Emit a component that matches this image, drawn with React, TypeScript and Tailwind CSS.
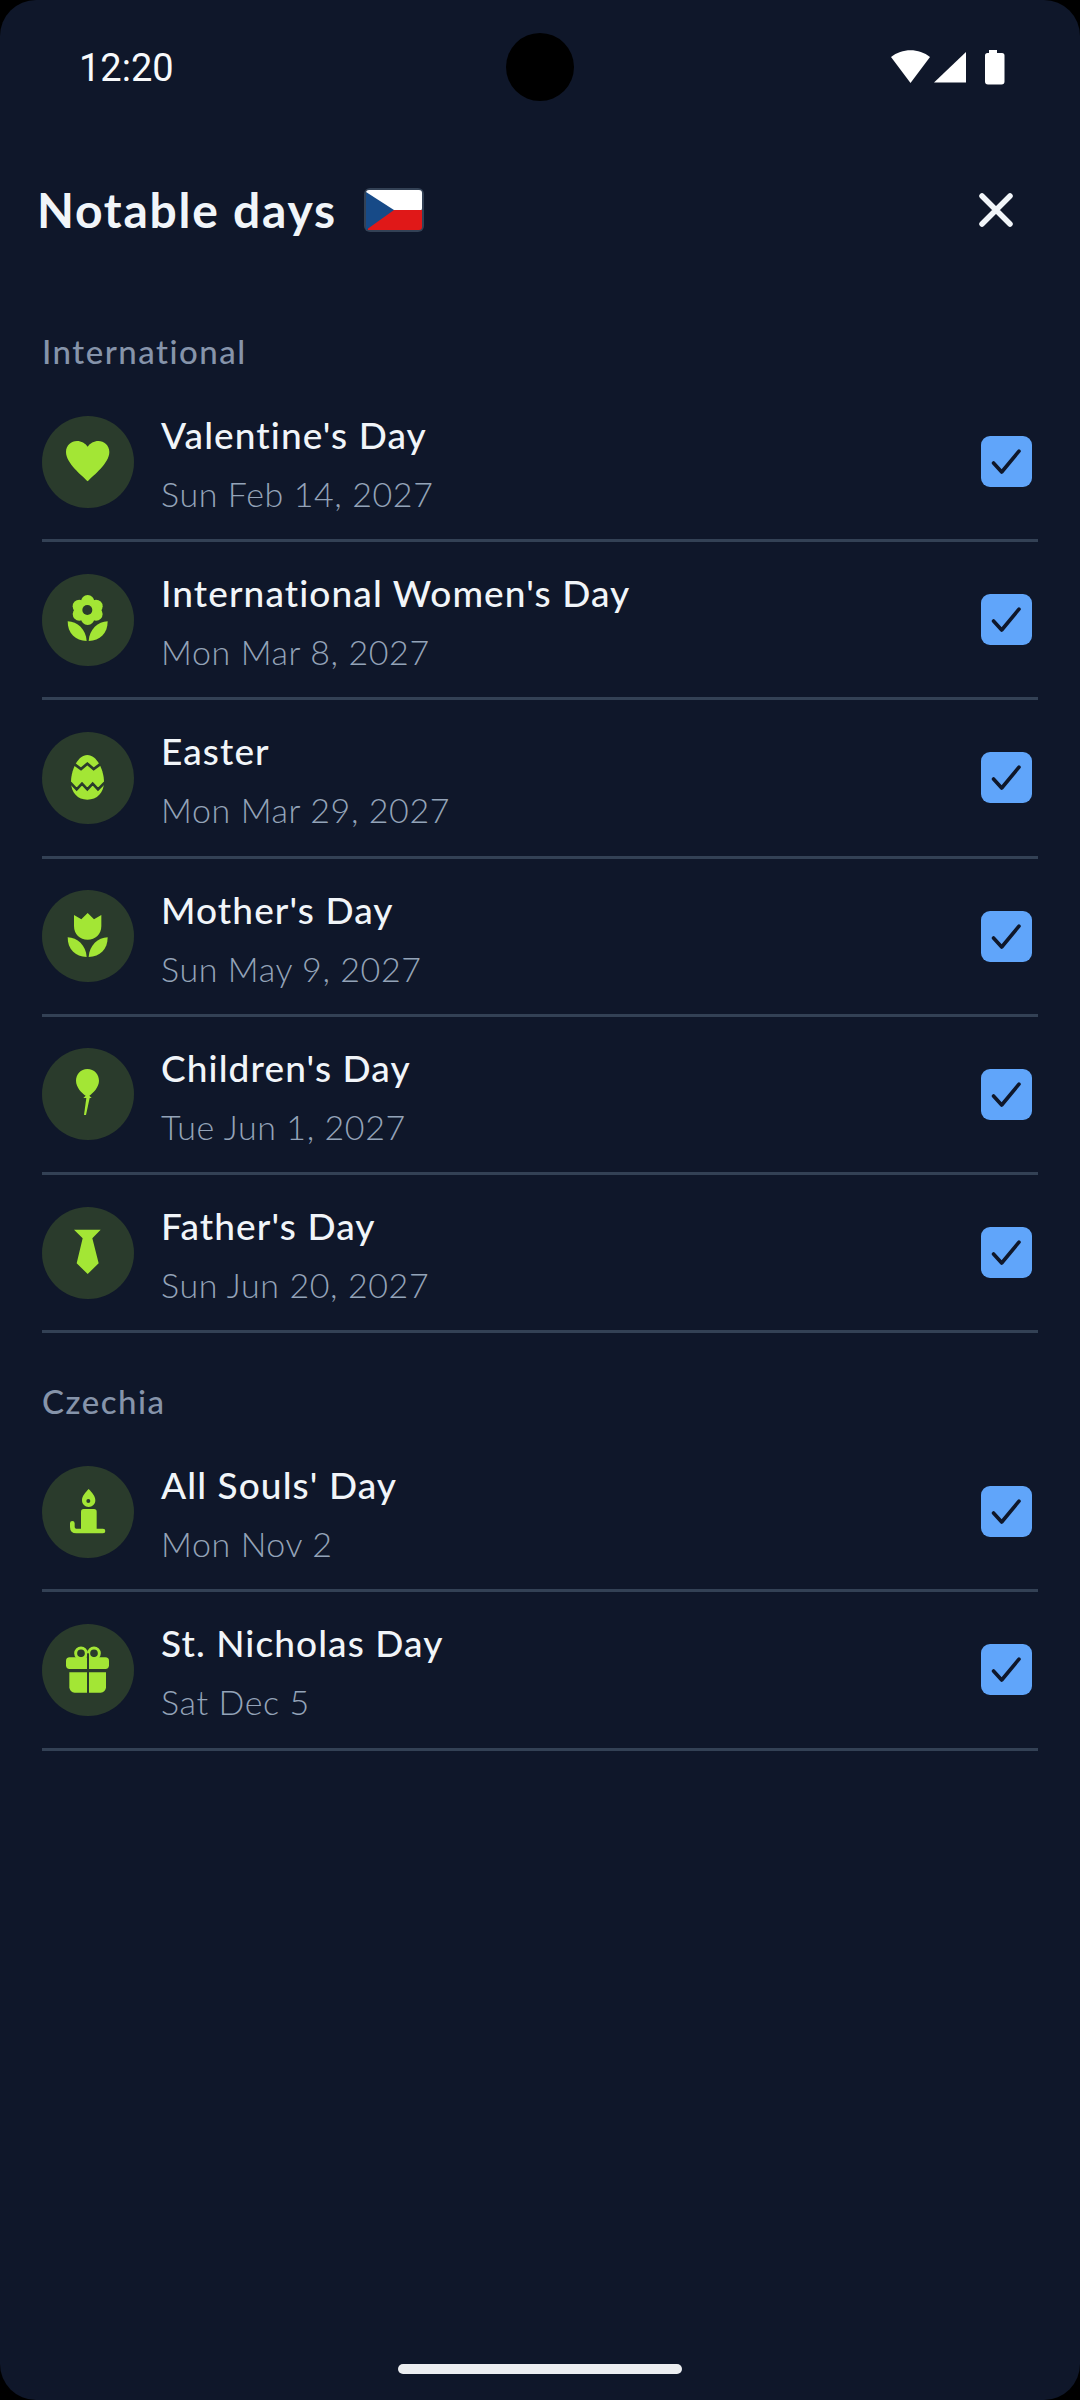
import React from "react";

const LIME = "#a3e635";
const CIRCLE = "#2a3b2c";

const Leaves = () => (
  <>
    <path d="M77 142 C106 143 132 166 134 201 C100 201 77 178 77 142Z" fill={LIME} />
    <path d="M197 142 C168 143 142 166 140 201 C174 201 197 178 197 142Z" fill={LIME} />
  </>
);

const icons: Record<string, React.ReactNode> = {
  heart: (
    <path
      d="M137 196 C120 178 72 142 72 108 C72 88 88 75 105 75 C118 75 130 82 137 92 C144 82 156 75 169 75 C186 75 202 88 202 108 C202 142 154 178 137 196Z"
      fill={LIME}
    />
  ),
  flower: (
    <>
      <circle cx="137" cy="83" r="20" fill={LIME} />
      <circle cx="137" cy="133" r="20" fill={LIME} />
      <circle cx="112" cy="97" r="20" fill={LIME} />
      <circle cx="162" cy="97" r="20" fill={LIME} />
      <circle cx="112" cy="120" r="20" fill={LIME} />
      <circle cx="162" cy="120" r="20" fill={LIME} />
      <circle cx="137" cy="108" r="27" fill={LIME} />
      <circle cx="136" cy="108" r="15" fill={CIRCLE} />
      <Leaves />
    </>
  ),
  egg: (
    <>
      <path
        d="M136 69 C165 69 186 115 186 150 C186 182 165 203 136 203 C107 203 87 182 87 150 C87 115 107 69 136 69Z"
        fill={LIME}
      />
      <path d="M98 97 L117 111 L136 95 L155 111 L174 97" fill="none" stroke={CIRCLE} strokeWidth="8" />
      <path d="M85 152 L104 172 L120 155 L136 172 L152 155 L168 172 L188 152" fill="none" stroke={CIRCLE} strokeWidth="8" />
    </>
  ),
  tulip: (
    <>
      <path
        d="M96 75 L118 88 L137 69 L156 88 L178 75 L178 108 C178 133 160 149 137 149 C114 149 96 133 96 108Z"
        fill={LIME}
      />
      <Leaves />
    </>
  ),
  balloon: (
    <>
      <path
        d="M136 63 C157 63 171 80 171 98 C171 118 152 136 142 143 L149 150 L124 150 L131 143 C120 136 102 118 102 98 C102 80 116 63 136 63Z"
        fill={LIME}
      />
      <path d="M133 150 L143 150 L132 201 L126 201Z" fill={LIME} />
    </>
  ),
  tie: <path d="M96 68 L176 68 L151 94 L170 169 L137 201 L104 169 L122 94Z" fill={LIME} />,
  candle: (
    <>
      <path d="M140 69 C150 80 160 90 160 103 C160 115 151 123 140 123 C129 123 120 115 120 103 C120 90 130 80 140 69Z" fill={LIME} />
      <circle cx="139" cy="105" r="6" fill={CIRCLE} />
      <path d="M117 137 a8 8 0 0 1 8 -8 h31 a8 8 0 0 1 8 8 V192 H117Z" fill={LIME} />
      <path d="M91 172 V183 Q91 195 103 195 H183" fill="none" stroke={LIME} strokeWidth="14" strokeLinecap="round" />
    </>
  ),
  gift: (
    <>
      <circle cx="117" cy="88" r="16" fill="none" stroke={LIME} strokeWidth="9" />
      <circle cx="156" cy="88" r="16" fill="none" stroke={LIME} strokeWidth="9" />
      <rect x="72" y="100" width="129" height="35" rx="11" fill={LIME} />
      <path d="M82 145 H192 V190 a16 16 0 0 1 -16 16 H98 a16 16 0 0 1 -16 -16Z" fill={LIME} />
      <rect x="135" y="88" width="6" height="120" fill={CIRCLE} />
    </>
  ),
};

type Day = { icon: string; title: string; date: string };

const international: Day[] = [
  { icon: "heart", title: "Valentine's Day", date: "Sun Feb 14, 2027" },
  { icon: "flower", title: "International Women's Day", date: "Mon Mar 8, 2027" },
  { icon: "egg", title: "Easter", date: "Mon Mar 29, 2027" },
  { icon: "tulip", title: "Mother's Day", date: "Sun May 9, 2027" },
  { icon: "balloon", title: "Children's Day", date: "Tue Jun 1, 2027" },
  { icon: "tie", title: "Father's Day", date: "Sun Jun 20, 2027" },
];

const czechia: Day[] = [
  { icon: "candle", title: "All Souls' Day", date: "Mon Nov 2" },
  { icon: "gift", title: "St. Nicholas Day", date: "Sat Dec 5" },
];

function Row({ day }: { day: Day }) {
  return (
    <div className="flex h-[158.2px] items-center border-b-[3px] border-[#334155] pr-[6px]">
      <div className="flex h-[92px] w-[92px] shrink-0 items-center justify-center rounded-full bg-[#2a3b2c]">
        <svg width="92" height="92" viewBox="0 0 276 276">
          {icons[day.icon]}
        </svg>
      </div>
      <div className="ml-[27px] flex flex-1 flex-col pt-[3px]">
        <div className="h-[58px] text-[37px] font-medium leading-[58px] tracking-[1.1px] text-[#f1f5f9]">{day.title}</div>
        <div className="h-[56px] text-[34px] font-light leading-[60px] tracking-[0.6px] text-[#94a3b8]">{day.date}</div>
      </div>
      <div className="flex h-[51px] w-[51px] items-center justify-center rounded-[9px] bg-[#60a5fa]">
        <svg width="51" height="51" viewBox="0 0 51 51">
          <path d="M12.5 27 L20.7 36 L38 15.2" fill="none" stroke="#0f172a" strokeWidth="3.6" strokeLinecap="round" strokeLinejoin="round" />
        </svg>
      </div>
    </div>
  );
}

function Section({ label, days, className }: { label: string; days: Day[]; className: string }) {
  return (
    <section className={className}>
      <div className="h-[56px] text-[33px] font-medium leading-[46px] tracking-[1.5px] text-[#8694aa]">{label}</div>
      {days.map((d) => (
        <Row key={d.title} day={d} />
      ))}
    </section>
  );
}

export default function App() {
  return (
    <div className="h-[2400px] w-[1080px] bg-black">
      <div className="relative h-[2400px] w-[1080px] overflow-hidden rounded-[36px] bg-[#0f172a] font-['Lato',sans-serif]">
        <div className="absolute left-[506px] top-[33px] h-[68px] w-[68px] rounded-full bg-black" />

        <div className="flex h-[134px] items-center justify-between pt-[1px] pl-[79px] pr-[75px]">
          <span className="font-['Roboto',sans-serif] text-[38px] leading-none text-[#f8fafc]">12:20</span>
          <svg width="114" height="36" viewBox="0 0 114 36" fill="#ffffff">
            <path d="M0 7 C11 -2 28 -2 39 7 L19.5 33Z" />
            <path d="M75 2 V32.500 H43Z" />
            <path d="M98 0 H106 V3 H111 a2.500 2.500 0 0 1 2.500 2.500 V31.500 a3 3 0 0 1 -3 3 H97 a3 3 0 0 1 -3 -3 V5.500 A2.500 2.500 0 0 1 96.500 3 H98Z" />
          </svg>
        </div>

        <div className="flex h-[152px] items-center justify-between pl-[37px] pr-[67px]">
          <div className="flex items-center">
            <h1 className="text-[48px] font-bold leading-none tracking-[1.75px] text-[#f1f5f9]">Notable days</h1>
            <svg className="ml-[26px]" width="62" height="46" viewBox="0 0 62 46">
              <rect x="1" y="1" width="60" height="44" rx="6" fill="#334155" />
              <rect x="3" y="3" width="56" height="21" rx="3" fill="#ffffff" />
              <path d="M3 23 H59 V40 a3 3 0 0 1 -3 3 H5Z" fill="#e01818" />
              <path d="M3 5 L31 23 L3 43Z" fill="#174a87" />
            </svg>
          </div>
          <svg width="34" height="34" viewBox="0 0 34 34">
            <path d="M3 3 L31 31 M31 3 L3 31" stroke="#f1f5f9" strokeWidth="5.500" strokeLinecap="round" />
          </svg>
        </div>

        <Section label="International" days={international} className="px-[42px] pt-[42px]" />
        <Section label="Czechia" days={czechia} className="px-[42px] pt-[45px]" />

        <div className="absolute bottom-[26px] left-[398px] h-[10px] w-[284px] rounded-full bg-[#eceef1]" />
      </div>
    </div>
  );
}
